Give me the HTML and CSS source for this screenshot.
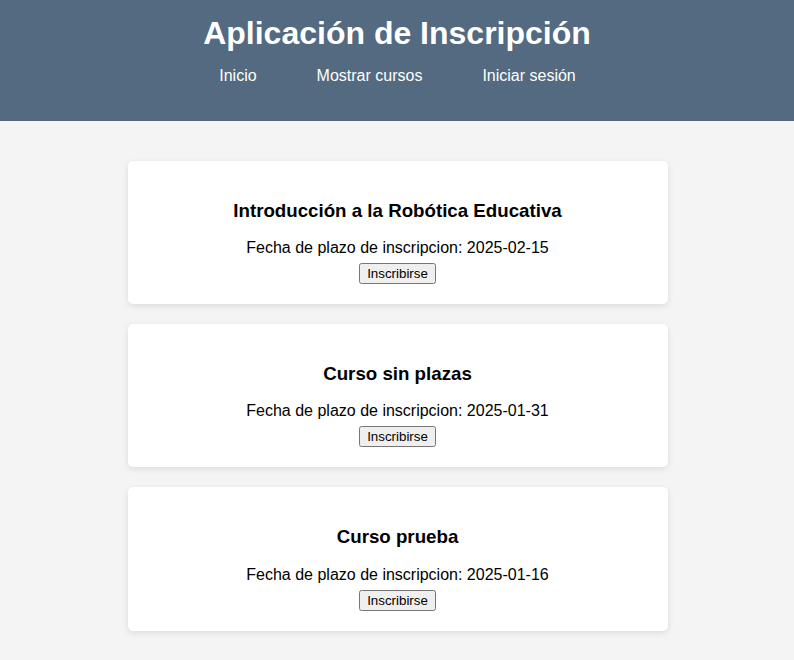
FILE: index.html
```html
<!DOCTYPE html>
<html lang="es">
<head>
<meta charset="utf-8">
<title>Aplicación de Inscripción</title>
<link rel="stylesheet" href="styles.css">
</head>
<body>
<header class="site-header">
  <h1 class="site-title">Aplicación de Inscripción</h1>
  <nav class="site-nav">
    <a href="#">Inicio</a>
    <a href="#">Mostrar cursos</a>
    <a href="#">Iniciar sesión</a>
  </nav>
</header>
<main class="course-list">
  <div class="course-card">
    <h3 class="course-title">Introducción a la Robótica Educativa</h3>
    <p class="course-date">Fecha de plazo de inscripcion: 2025-02-15</p>
    <button class="course-btn">Inscribirse</button>
  </div>
  <div class="course-card">
    <h3 class="course-title">Curso sin plazas</h3>
    <p class="course-date">Fecha de plazo de inscripcion: 2025-01-31</p>
    <button class="course-btn">Inscribirse</button>
  </div>
  <div class="course-card">
    <h3 class="course-title">Curso prueba</h3>
    <p class="course-date">Fecha de plazo de inscripcion: 2025-01-16</p>
    <button class="course-btn">Inscribirse</button>
  </div>
</main>
</body>
</html>
```
FILE: styles.css
```css
html, body {
  margin: 0;
  padding: 0;
}
body {
  background: #f4f4f4;
  font-family: "Liberation Sans", Arial, sans-serif;
  color: #000;
}
.site-header {
  background: #536a80;
  color: #fff;
  text-align: center;
  padding: 15px 0 36px;
}
.site-title {
  margin: 0;
  font-size: 32px;
  line-height: 37px;
  font-weight: bold;
}
.site-nav {
  margin-top: 15px;
  padding-left: 1px;
  display: flex;
  justify-content: center;
  gap: 60px;
}
.site-nav a {
  color: #fff;
  text-decoration: none;
  font-size: 16px;
  line-height: 18px;
}
.course-list {
  padding: 40px 0 40px 1px;
  display: flex;
  flex-direction: column;
  align-items: center;
  gap: 20px;
}
.course-card {
  box-sizing: border-box;
  width: 540px;
  background: #fff;
  border-radius: 5px;
  box-shadow: 0 2px 6px rgba(0, 0, 0, 0.1);
  padding: 20px;
  text-align: center;
}
.course-title {
  font-size: 18.72px;
  line-height: 21.5px;
  margin: 18.72px 0 18px;
}
.course-date {
  font-size: 16px;
  line-height: 18px;
  margin: 0 0 6px;
}
.course-btn {
  font-family: "Liberation Sans", Arial, sans-serif;
  font-size: 13.33px;
  line-height: 15px;
  padding: 1px 6px;
}
```
